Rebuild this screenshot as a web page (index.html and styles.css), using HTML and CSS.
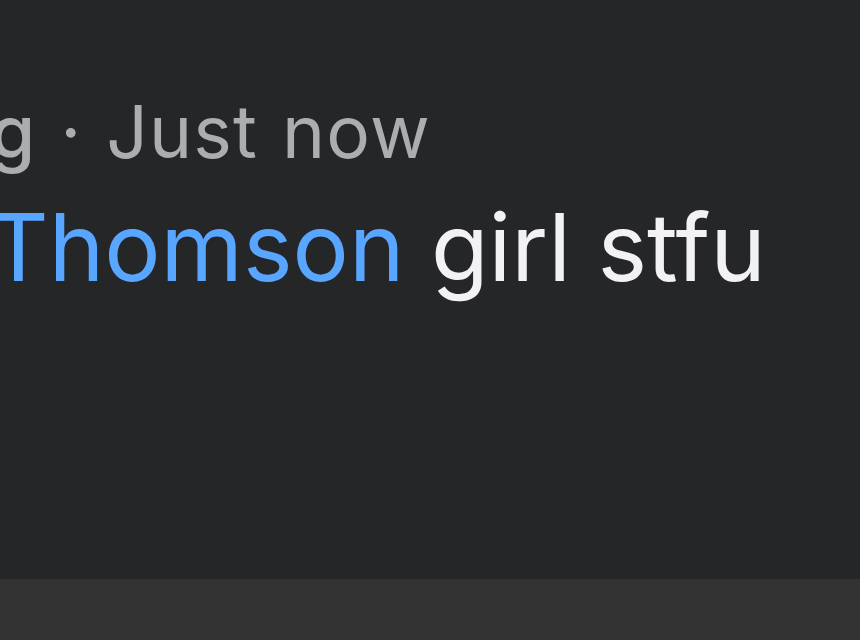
FILE: index.html
```html
<!DOCTYPE html>
<html>
<head>
<meta charset="utf-8">
<link rel="stylesheet" href="styles.css">
</head>
<body>
<div class="screen">
  <div class="comment">
    <div class="meta"><span class="author">g</span> · Just now</div>
    <div class="body"><span class="mention">Thomson</span> girl stfu</div>
  </div>
  <div class="bar"></div>
</div>
</body>
</html>
```
FILE: styles.css
```css
html, body {
  margin: 0;
  padding: 0;
  background: #252628;
}
.screen {
  width: 860px;
  height: 640px;
  display: flex;
  flex-direction: column;
  overflow: hidden;
  font-family: Inter, "Noto Sans", sans-serif;
}
.comment {
  height: 579px;
  background: #252628;
  padding-top: 88px;
  box-sizing: border-box;
  overflow: hidden;
}
.meta {
  font-size: 73px;
  line-height: 88px;
  color: #acadb1;
  margin-left: -10px;
  letter-spacing: 1.2px;
  word-spacing: 2px;
  white-space: nowrap;
}
.author {
  color: #acadb1;
  font-weight: 500;
}
.body {
  font-size: 94px;
  line-height: 112px;
  color: #f2f2f5;
  margin-left: -12px;
  margin-top: 15px;
  white-space: nowrap;
}
.mention {
  color: #58a6ff;
}
.bar {
  flex: 1;
  background: #333333;
}
```
